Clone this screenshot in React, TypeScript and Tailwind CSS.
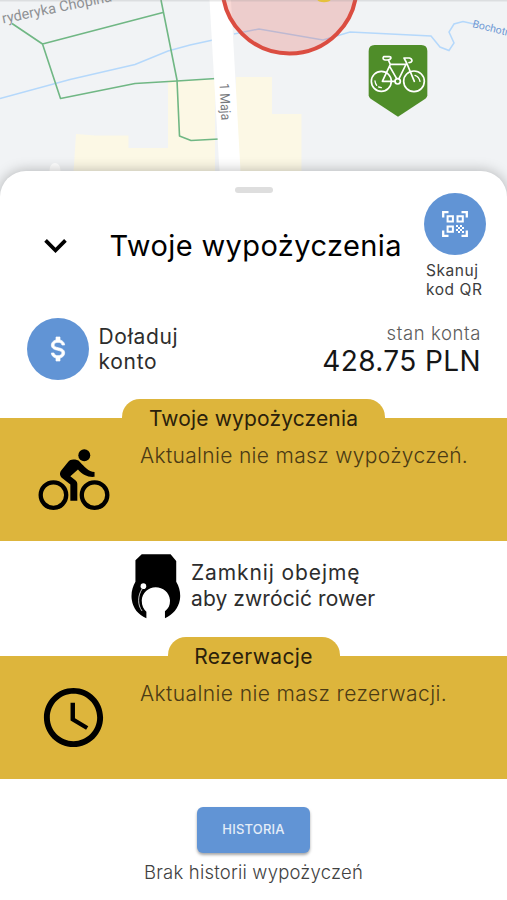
import React from 'react';
import { MdSchedule } from 'react-icons/md';

interface SectionProps {
  title: string;
  message: string;
  tabClass: string;
  titleClass: string;
  messageClass: string;
  icon: React.ReactNode;
}

function BikePin() {
  return (
    <g transform="translate(253 0) scale(0.33333)">
      <path d="M365 135H505Q523 135 523 153V286Q523 292 517 296L435 350L353 296Q347 292 347 286V153Q347 135 365 135Z" fill="#4f8d29" />
      <g fill="none" stroke="#fff" strokeWidth="5" strokeLinecap="round" strokeLinejoin="round">
        <circle cx="385" cy="244" r="30" />
        <circle cx="483" cy="244" r="31" />
        <circle cx="434" cy="244" r="8" />
        <path d="M426 244H388L412 193L406 180M412 193H458M410 199L431 236M438 236L461 189L484 244M461 189L453 174H469Q477 176 477 183Q475 188 468 188" />
        <path d="M392 170H409Q414 170 414 174Q412 180 403 180H396Q390 179 390 174Z" />
        <path d="M366 243Q367 252 371 256M377 261L385 263M486 226Q498 230 501 244" strokeWidth="4" />
      </g>
    </g>
  );
}

function MapView() {
  return (
    <svg viewBox="0 0 507 200" className="block h-[200px] w-full bg-[#f1f3f5]">
      <path d="M76 134L95 135.5H128.500V148H168V80H215V180H73Z" fill="#fcf8e5" />
      <path d="M236 77H272V114H301.500V180H236Z" fill="#fcf8e5" />
      <path d="M0 98.500L70 79.500L135 64.500L168 51L190 45L213 40M234 34L259 29L323 40L350 32L431 36L440 47L449 50.500L454 43L449 32L454 24L463 21.500L474 24" fill="none" stroke="#b5d8fb" strokeWidth="1.500" />
      <g fill="none" stroke="#70b784" strokeWidth="1.600" strokeLinejoin="round">
        <path d="M12 23.500L42.500 44L163 12.500M42.500 44L60.500 98.500L135 83.500L177 81L216 78.500" />
        <path d="M161 0L177 80L179.500 136L191 140.500L219 139" />
      </g>
      <path d="M209.500 0H231L241 180H220Z" fill="#fff" />
      <circle cx="289.500" cy="-13.500" r="67" fill="#df4739" fillOpacity="0.220" stroke="#db4d41" strokeWidth="4" />
      <text x="3" y="23.500" transform="rotate(-11.500 3 23.500)" fontSize="14.500" fill="#8f9194" className="font-['Roboto']">ryderyka Chopina</text>
      <text x="219.500" y="83.500" transform="rotate(87 219.500 83.500)" fontSize="13.500" textLength="37" lengthAdjust="spacingAndGlyphs" fill="#77797d" className="font-['Roboto']">1 Maja</text>
      <text x="472" y="27" transform="rotate(14 472 27)" fontSize="10.500" fill="#6d98d4" className="font-['Roboto']">Bochotniczanka</text>
      <ellipse cx="55" cy="170" rx="5.500" ry="7" fill="#fff" />
      <BikePin />
      <rect width="507" height="1.500" fill="#8a8a8a" fillOpacity="0.200" />
      <ellipse cx="324" cy="0" rx="6.500" ry="2.200" fill="#e5c13c" />
    </svg>
  );
}

function QrIcon() {
  return (
    <svg viewBox="0 0 26 26" className="size-[26px]" fill="none" stroke="#fff">
      <path d="M1.200 6.500V1.200H6.500M19.500 1.200H24.800V6.500M1.200 19.500V24.800H6.500M19.500 24.800H24.800V19.500" strokeWidth="2.300" />
      <path d="M5.600 5.200H10.900V10.500H5.600ZM15.500 5.200H20.800V10.500H15.500ZM5.600 15.500H10.900V20.800H5.600Z" strokeWidth="2" />
      <path d="M14 15H16M18 15H20M16 17H18M20 17H22M14 19H16M18 19H20M16 21H18M20 21H22" strokeWidth="2" />
    </svg>
  );
}

function CyclistIcon() {
  return (
    <svg viewBox="112 174 216 184" className="h-[61px] w-[72px]">
      <g fill="none" stroke="#000" strokeWidth="13">
        <circle cx="158" cy="313" r="38.500" />
        <circle cx="282" cy="313" r="38.500" />
      </g>
      <circle cx="251" cy="193" r="18" />
      <path d="M282 243C264 243 250 226 238 213C232 207 226 206 218 206C211 206 207 208 202 213L182 238C175 247 177 256 185 262L209 281V330H230V279Q230 273 225 269L209 256L232 236C246 252 262 260 282 258Z" />
    </svg>
  );
}

function ClampIcon() {
  return (
    <svg viewBox="94 40 150 196" className="h-[65px] w-[50px]">
      <path d="M126 41H213L230 61V124C240 140 244 160 241 178C236 205 220 222 196 234V213C208 204 212 192 211 178C209 155 190 140 168 140C146 140 127 157 126 180C126 196 132 207 140 214V234C115 222 100 205 96 178C93 158 98 140 107 124V59Z" />
      <circle cx="131" cy="137" r="8.500" fill="#fff" />
      <path d="M128 144C113 165 113 194 127 212" fill="none" stroke="#ccc" strokeWidth="3" />
    </svg>
  );
}

function Section({ title, message, tabClass, titleClass, messageClass, icon }: SectionProps) {
  return (
    <section>
      <div className={`mx-auto h-[19px] rounded-t-[18px] bg-[#ddb53c] ${tabClass}`}>
        <h2 className={`whitespace-nowrap pt-[7px] text-center text-[21px] leading-[26px] text-[#2b210b] ${titleClass}`}>{title}</h2>
      </div>
      <div className="flex h-[123px] bg-[#ddb53c]">
        <div className="flex w-[140px] shrink-0 items-center pl-[37.5px]">{icon}</div>
        <p className={`whitespace-nowrap pt-[25px] text-[21px] leading-[26px] font-light text-[#4a3a14] ${messageClass}`}>{message}</p>
      </div>
    </section>
  );
}

export default function App() {
  return (
    <div className="h-[900px] w-[507px] overflow-hidden bg-white font-['Inter',sans-serif]">
      <MapView />
      <main className="relative -mt-[29px] h-[729px] rounded-t-[26px] bg-white pt-4 shadow-[0_0_14px_rgba(0,0,0,0.28)]">
        <div className="mx-auto h-1.5 w-[38px] rounded-[3px] bg-[#dedede]" />

        <header className="flex h-[125px] items-start">
          <svg viewBox="0 0 24 24" className="mt-[30px] ml-[32.5px] size-[45px] shrink-0">
            <path d="M7.410 8.580L12 13.170L16.590 8.580L18 10L12 16L6 10Z" />
          </svg>
          <h1 className="mt-[35px] ml-[32px] w-[314.5px] shrink-0 whitespace-nowrap text-[29px] leading-9 tracking-[0.4px] text-black">Twoje wypożyczenia</h1>
          <div>
            <div className="flex size-[62px] items-center justify-center rounded-full bg-[#6194d5]">
              <QrIcon />
            </div>
            <p className="mt-1.5 ml-0.5 whitespace-nowrap text-[15.500px] leading-[19px] tracking-[0.55px] text-[#3d3d3d]">Skanuj<br />kod QR</p>
          </div>
        </header>

        <div className="flex h-[81px] items-start pr-[26px] pl-[26.5px]">
          <div className="flex size-[62px] items-center justify-center rounded-full bg-[#6194d5]">
            <svg viewBox="0 0 24 24" className="size-8 fill-white stroke-white stroke-[0.5]">
              <path d="M7 15H9C9 16.080 10.370 17 12 17C13.630 17 15 16.080 15 15C15 13.900 13.960 13.500 11.760 12.970C9.640 12.440 7 11.780 7 9C7 7.210 8.470 5.690 10.500 5.180V3H13.500V5.180C15.530 5.690 17 7.210 17 9H15C15 7.920 13.630 7 12 7C10.370 7 9 7.920 9 9C9 10.100 10.040 10.500 12.240 11.030C14.360 11.560 17 12.220 17 15C17 16.790 15.530 18.310 13.500 18.820V21H10.500V18.820C8.470 18.310 7 16.790 7 15Z" />
            </svg>
          </div>
          <p className="mt-[6px] ml-[10px] text-[21px] leading-[25px] tracking-[0.7px] text-[#2d2d2d]">Doładuj<br />konto</p>
          <div className="ml-auto text-right whitespace-nowrap">
            <p className="mt-[3px] text-[18.500px] leading-6 font-light tracking-[0.6px] text-[#5c5c5c]">stan konta</p>
            <p className="text-[28px] leading-8 tracking-[0.4px] text-[#161616]">428.75 PLN</p>
          </div>
        </div>

        <Section
          title="Twoje wypożyczenia"
          message="Aktualnie nie masz wypożyczeń."
          tabClass="w-[263px]"
          titleClass="tracking-[0.15px]"
          messageClass="tracking-[0.33px]"
          icon={<CyclistIcon />}
        />

        <div className="flex h-24 items-start pt-[13px] pl-[131px]">
          <ClampIcon />
          <div className="mt-[6px] ml-[10px] whitespace-nowrap text-[21px] leading-[26px] text-[#2d2d2d]">
            <p className="tracking-[0.9px]">Zamknij obejmę</p>
            <p className="tracking-[0.1px]">aby zwrócić rower</p>
          </div>
        </div>

        <Section
          title="Rezerwacje"
          message="Aktualnie nie masz rezerwacji."
          tabClass="w-[172px]"
          titleClass="tracking-[0.35px]"
          messageClass="tracking-[0.4px]"
          icon={<MdSchedule className="size-[71px]" />}
        />

        <footer className="flex flex-col items-center pt-7">
          <button className="h-[46px] w-[113px] rounded-md bg-[#6194d5] text-[13px] font-medium tracking-[0.2px] text-[#e4edf8] shadow-[0_2px_3px_rgba(0,0,0,0.35)]">HISTORIA</button>
          <p className="mt-[7px] whitespace-nowrap text-[18.500px] leading-6 font-light tracking-[0.2px] text-[#424242]">Brak historii wypożyczeń</p>
        </footer>
      </main>
    </div>
  );
}
